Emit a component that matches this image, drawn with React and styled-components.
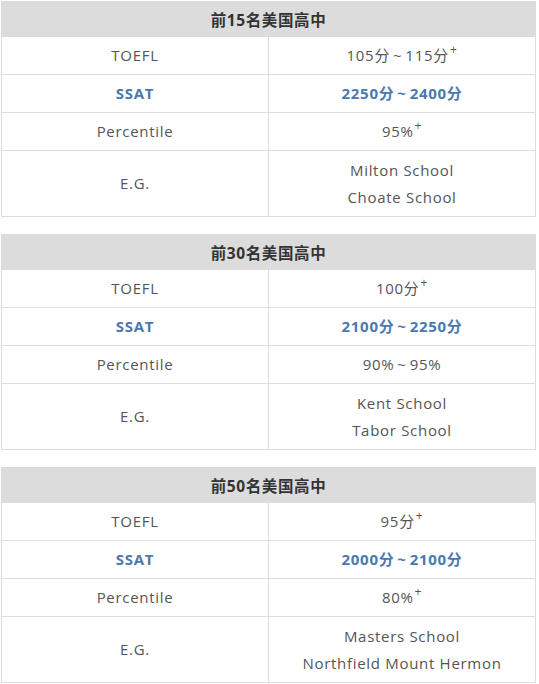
import styled, { createGlobalStyle } from 'styled-components';

const GlobalStyle = createGlobalStyle`
  body {
    margin: 0;
    background: #fff;
    font-family: "Open Sans", "Noto Sans CJK SC", sans-serif;
  }
`;

const tiers = [
  {
    title: '前15名美国高中',
    toefl: [['105分', '115分'], true],
    ssat: ['2250分', '2400分'],
    percentile: [['95%'], true],
    schools: ['Milton School', 'Choate School'],
  },
  {
    title: '前30名美国高中',
    toefl: [['100分'], true],
    ssat: ['2100分', '2250分'],
    percentile: [['90%', '95%'], false],
    schools: ['Kent School', 'Tabor School'],
  },
  {
    title: '前50名美国高中',
    toefl: [['95分'], true],
    ssat: ['2000分', '2100分'],
    percentile: [['80%'], true],
    schools: ['Masters School', 'Northfield Mount Hermon'],
  },
];

const Page = styled.div`
  padding: 1px 0 0 1px;
  width: 535px;
  display: flex;
  flex-direction: column;
  gap: 17px;
`;

const Table = styled.table`
  width: 535px;
  border-collapse: collapse;
  table-layout: fixed;
  font-size: 15px;
  letter-spacing: 0.7px;
  color: #555;
`;

const Head = styled.th`
  height: 34px;
  padding: 0;
  background: #dcdcdc;
  border: 1px solid #dcdcdc;
  color: #333;
  font-size: 15.5px;
  letter-spacing: 0.6px;
  font-weight: bold;
  text-align: center;
`;

const Cell = styled.td`
  height: ${(p) => (p.$tall ? 65 : 37)}px;
  padding: 0;
  border: 1px solid #ddd;
  text-align: center;
  line-height: 27px;
  color: ${(p) => (p.$accent ? '#4a79b0' : '#555')};
  font-weight: ${(p) => (p.$accent ? 'bold' : 'normal')};
`;

const Tilde = styled.span`
  margin: 0 3px;
`;

const Plus = styled.sup`
  font-size: 12px;
  line-height: 0;
  vertical-align: 7px;
  margin-left: 1px;
`;

const Range = ({ parts, plus }) => (
  <>
    {parts[0]}
    {parts[1] && (
      <>
        <Tilde>~</Tilde>
        {parts[1]}
      </>
    )}
    {plus && <Plus>+</Plus>}
  </>
);

export default function App() {
  return (
    <>
      <GlobalStyle />
      <Page>
        {tiers.map((t) => (
          <Table key={t.title}>
            <thead>
              <tr>
                <Head colSpan={2}>{t.title}</Head>
              </tr>
            </thead>
            <tbody>
              <tr>
                <Cell>TOEFL</Cell>
                <Cell>
                  <Range parts={t.toefl[0]} plus={t.toefl[1]} />
                </Cell>
              </tr>
              <tr>
                <Cell $accent>SSAT</Cell>
                <Cell $accent>
                  <Range parts={t.ssat} />
                </Cell>
              </tr>
              <tr>
                <Cell>Percentile</Cell>
                <Cell>
                  <Range parts={t.percentile[0]} plus={t.percentile[1]} />
                </Cell>
              </tr>
              <tr>
                <Cell $tall>E.G.</Cell>
                <Cell $tall>
                  {t.schools.map((s) => (
                    <div key={s}>{s}</div>
                  ))}
                </Cell>
              </tr>
            </tbody>
          </Table>
        ))}
      </Page>
    </>
  );
}
